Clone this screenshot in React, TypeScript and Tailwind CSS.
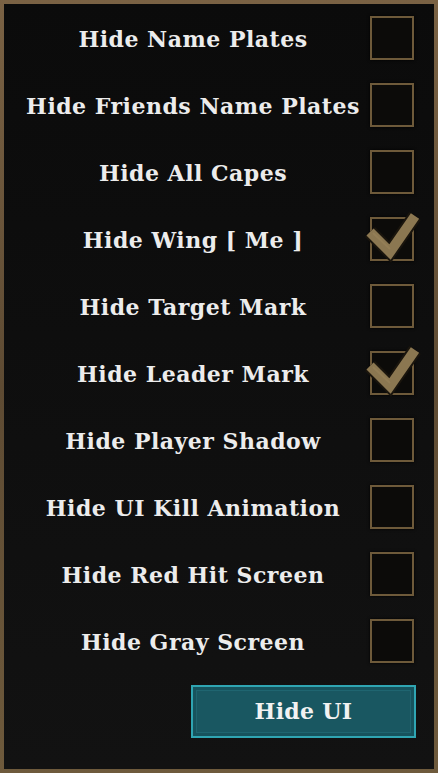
import type { JSX } from 'react'

const options: { label: string; checked: boolean }[] = [
	{ label: 'Hide Name Plates', checked: false },
	{ label: 'Hide Friends Name Plates', checked: false },
	{ label: 'Hide All Capes', checked: false },
	{ label: 'Hide Wing [ Me ]', checked: true },
	{ label: 'Hide Target Mark', checked: false },
	{ label: 'Hide Leader Mark', checked: true },
	{ label: 'Hide Player Shadow', checked: false },
	{ label: 'Hide UI Kill Animation', checked: false },
	{ label: 'Hide Red Hit Screen', checked: false },
	{ label: 'Hide Gray Screen', checked: false },
]

function CheckBox({ checked }: { checked: boolean }): JSX.Element {
	return (
		<div className="relative w-[44px] h-[44px] shrink-0 border-2 border-[#6e5a3a] bg-[#0c0b09] shadow-[0_0_3px_#000]">
			{checked && (
				<svg className="absolute left-[-6px] top-[-10px] w-[56px] h-[56px] overflow-visible" viewBox="0 0 56 56">
					<polyline points="4,23 24,43 49,7" fill="none" stroke="#1a150d" strokeWidth="14" strokeLinejoin="miter" />
					<polyline points="4,23 24,43 49,7" fill="none" stroke="#8b7751" strokeWidth="10" strokeLinejoin="miter" />
					<polyline points="7,24 24,40" fill="none" stroke="#a08a5e" strokeWidth="2" strokeOpacity="0.4" />
				</svg>
			)}
		</div>
	)
}

export default function App(): JSX.Element {
	return (
		<div className="w-[438px] h-[773px] p-[4px] bg-gradient-to-b from-[#7a6244] via-[#5e4b33] to-[#6e5a3c]" style={{ fontFamily: '"DejaVu Serif", "Liberation Serif", serif' }}>
			<div className="w-full h-full bg-gradient-to-b from-[#0b0b0b] to-[#121212] flex flex-col">
				{options.map((o) => (
					<div key={o.label} className="h-[67px] flex items-center pl-4 pr-5 gap-1">
						<div className="flex-1 text-center text-[#ececec] font-bold text-[22px] leading-none pt-[3px] tracking-[0.5px] whitespace-nowrap">{o.label}</div>
						<CheckBox checked={o.checked} />
					</div>
				))}
				<div className="flex justify-end pr-[18px] mt-[11px]">
					<button type="button" className="w-[225px] h-[53px] border-2 border-[#2fa5b2] bg-[#17535d] p-[3px]">
						<div className="w-full h-full border border-[#1f6570] bg-[#195761] flex items-center justify-center text-[#f2f2f2] font-bold text-[22px] tracking-[0.3px]">
							Hide UI
						</div>
					</button>
				</div>
			</div>
		</div>
	)
}
